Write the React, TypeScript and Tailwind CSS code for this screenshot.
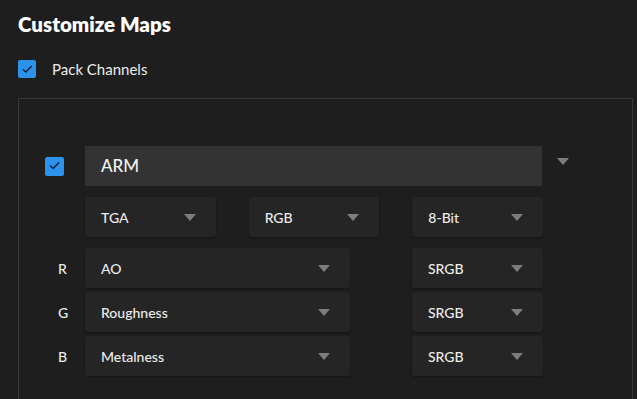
const font = { fontFamily: "Lato, 'Noto Sans', sans-serif" };

function Check({ size }: { size: string }) {
    return (
        <div className={`${size} flex items-center justify-center rounded-[2px] bg-[#2b93ec]`}>
            <svg viewBox="0 0 16 16" className="w-[70%] h-[70%]" fill="none">
                <path d="M3 8.5l3.2 3L13 4.5" stroke="#0f1f33" strokeWidth="1.8" strokeLinecap="round" strokeLinejoin="round" />
            </svg>
        </div>
    );
}

function Arrow({ className = "" }: { className?: string }) {
    return (
        <svg viewBox="0 0 12 7" className={`w-[12px] h-[7px] shrink-0 ${className}`}>
            <path d="M0 0h12L6 7z" fill="#7d7d7d" />
        </svg>
    );
}

function Select({ label, className = "" }: { label: string; className?: string }) {
    return (
        <div
            className={`h-10 flex items-center justify-between pl-4 pr-[20px] rounded-[3px] bg-[#252525] shadow-[0_1px_2px_rgba(0,0,0,0.35)] text-[14px] font-medium text-[#ececec] ${className}`}
        >
            <span>{label}</span>
            <Arrow />
        </div>
    );
}

function ChannelRow({ ch, map }: { ch: string; map: string }) {
    return (
        <div className="flex items-center">
            <div className="w-10 pl-[13px] text-[14px] font-medium text-[#ececec]">{ch}</div>
            <Select label={map} className="w-[265px]" />
            <Select label="SRGB" className="w-[131px] ml-[62px]" />
        </div>
    );
}

export default function App() {
    return (
        <div className="w-[637px] h-[399px] overflow-hidden bg-[#1e1e1e] px-[18px] pt-[10px]" style={font}>
            <h1 className="text-[20.5px] leading-7 font-extrabold text-white">Customize Maps</h1>
            <div className="mt-[22px] flex items-center gap-4 h-[18px]">
                <Check size="w-[18px] h-[18px]" />
                <span className="text-[15px] text-[#ececec] mt-[1px]">Pack Channels</span>
            </div>
            <div className="mt-[20px] w-[615px] h-[400px] border border-[#383838] pl-[26px] pt-[47px]">
                <div className="flex items-center">
                    <div className="w-10">
                        <Check size="w-[19px] h-[19px]" />
                    </div>
                    <div className="w-[457px] h-10 flex items-center pl-4 bg-[#333333] text-[17px] font-medium text-[#f2f2f2]">ARM</div>
                    <Arrow className="ml-[15px] -mt-[10px]" />
                </div>
                <div className="mt-[11px] ml-10 w-[458px] grid grid-cols-3 gap-[33px]">
                    <Select label="TGA" />
                    <Select label="RGB" />
                    <Select label="8-Bit" />
                </div>
                <div className="mt-[11px] flex flex-col gap-1">
                    <ChannelRow ch="R" map="AO" />
                    <ChannelRow ch="G" map="Roughness" />
                    <ChannelRow ch="B" map="Metalness" />
                </div>
            </div>
        </div>
    );
}
